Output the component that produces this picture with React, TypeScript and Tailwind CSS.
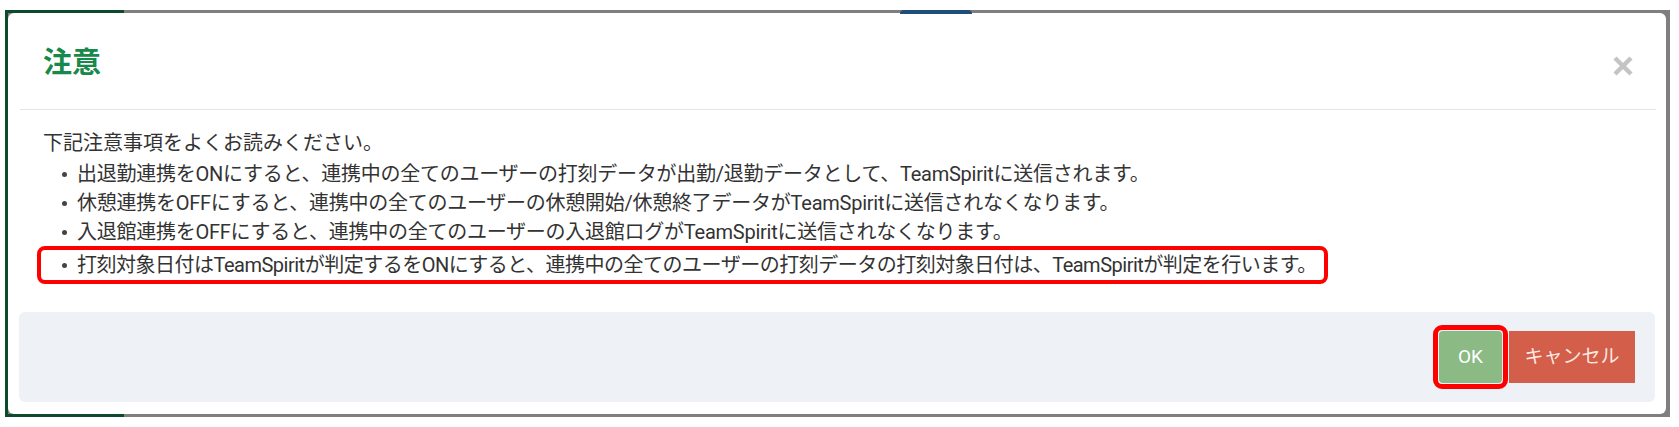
import React from "react";

const bullets = [
  "出退勤連携をONにすると、連携中の全てのユーザーの打刻データが出勤/退勤データとして、TeamSpiritに送信されます。",
  "休憩連携をOFFにすると、連携中の全てのユーザーの休憩開始/休憩終了データがTeamSpiritに送信されなくなります。",
  "入退館連携をOFFにすると、連携中の全てのユーザーの入退館ログがTeamSpiritに送信されなくなります。",
];

function Dot() {
  return (
    <span className="w-[16px] shrink-0 flex items-center">
      <span className="block w-[5px] h-[5px] rounded-full bg-[#444444] ml-[1px]" />
    </span>
  );
}

export default function App() {
  return (
    <div
      className="w-[1679px] h-[427px] bg-white pt-[10px] pl-[5px] text-[#333333]"
      style={{ fontFamily: 'Roboto, "Noto Sans CJK JP", sans-serif' }}
    >
      <div className="relative w-[1665px] h-[407px] bg-[#7f7f7f] pt-[3px] pl-[3px] pr-[4px] pb-[3px]">
        {/* frame decorations */}
        <div className="absolute left-0 top-0 w-[3px] h-full bg-[#0b4a2b]" />
        <div className="absolute left-0 top-0 w-[119px] h-[3px] bg-[#0b4a2b]" />
        <div className="absolute left-0 bottom-0 w-[119px] h-[3px] bg-[#0b4a2b]" />
        <div className="absolute left-[895px] top-0 w-[72px] h-[4px] bg-[#1f4e79] rounded-t-full" />

        <div className="h-full bg-white rounded-[6px] flex flex-col">
          {/* header */}
          <div className="h-[97px] ml-[12px] mr-[10px] border-b border-[#e5e5e5] flex items-center justify-between pl-[23px] pr-[22px]">
            <h2 className="text-[29px] font-bold text-[#17894a] leading-none mt-[4px]">注意</h2>
            <svg width="22" height="22" viewBox="0 0 22 22" className="mt-[10px]">
              <path d="M3 3 L19 19 M19 3 L3 19" stroke="#c4c4c4" strokeWidth="4.5" />
            </svg>
          </div>

          {/* body */}
          <div className="pl-[35px] pt-[19px] text-[20px] leading-[29px]">
            <p>下記注意事項をよくお読みください。</p>
            <ul className="mt-[2px] ml-[18px] tracking-[-0.25px]">
              {bullets.map((b) => (
                <li key={b} className="flex whitespace-nowrap">
                  <Dot />
                  <span>{b}</span>
                </li>
              ))}
              <li className="flex whitespace-nowrap tracking-[-0.5px] -ml-[24px] -mt-[1px] w-[1291px] h-[38px] items-center border-[4px] border-[#ff0000] rounded-[8px] pl-[20px]">
                <Dot />
                <span>打刻対象日付はTeamSpiritが判定するをONにすると、連携中の全てのユーザーの打刻データの打刻対象日付は、TeamSpiritが判定を行います。</span>
              </li>
            </ul>
          </div>

          {/* footer */}
          <div className="mt-auto mx-[11px] mb-[12px] h-[90px] bg-[#eef1f6] rounded-[6px] flex items-center justify-end pr-[20px]">
            <div className="border-[5px] border-[#ff0000] rounded-[9px] p-[1px]">
              <button className="w-[63px] h-[52px] bg-[#8bba84] rounded-[4px] text-white text-[19px] flex items-center justify-center">
                OK
              </button>
            </div>
            <button className="ml-[1px] w-[126px] h-[52px] bg-[#d35e4a] text-[#fbe9e5] text-[19px] flex items-center justify-center">
              キャンセル
            </button>
          </div>
        </div>
      </div>
    </div>
  );
}
